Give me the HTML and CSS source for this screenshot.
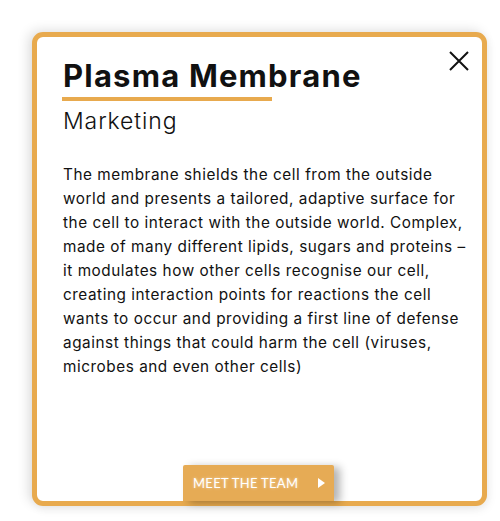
FILE: index.html
```html
<!DOCTYPE html>
<html>
<head>
<meta charset="utf-8">
<link rel="stylesheet" href="styles.css">
</head>
<body>
<div class="card">
  <button class="close" aria-label="Close">
    <svg width="20" height="20" viewBox="0 0 20 20"><path d="M1 1 L19 19 M19 1 L1 19" stroke="#111" stroke-width="2" fill="none"/></svg>
  </button>
  <h1 class="title">Plasma Membrane</h1>
  <div class="rule"></div>
  <h2 class="subtitle">Marketing</h2>
  <p class="text">The membrane shields the cell from the outside<br>world and presents a tailored, adaptive surface for<br>the cell to interact with the outside world. Complex,<br>made of many different lipids, sugars and proteins –<br>it modulates how other cells recognise our cell,<br>creating interaction points for reactions the cell<br>wants to occur and providing a first line of defense<br>against things that could harm the cell (viruses,<br>microbes and even other cells)</p>
  <a class="btn">MEET THE TEAM <span class="tri"></span></a>
</div>
</body>
</html>
```
FILE: styles.css
```css
html, body { margin: 0; padding: 0; background: #fff; }
body { width: 500px; height: 521px; font-family: "Inter", "Liberation Sans", sans-serif; color: #111; }
.card {
  position: relative;
  box-sizing: border-box;
  margin: 32px 0 0 32px;
  width: 455px;
  height: 474px;
  border: 5px solid #e8aa4e;
  border-radius: 11px;
  background: #fff;
  box-shadow: -4px -2px 12px rgba(0,0,0,0.12), 2px 4px 10px rgba(0,0,0,0.06);
  display: flex;
  flex-direction: column;
  padding: 21px 20px 0 26px;
}
.close {
  position: absolute; top: 14px; right: 13px;
  width: 20px; height: 20px; padding: 0; border: 0; background: none;
}
.close svg { display: block; }
.title {
  margin: 0; font-size: 31px; font-weight: 700; line-height: 36px; letter-spacing: 1.2px;
}
.rule { width: 210px; height: 4px; background: #e8aa4e; margin-top: 3px; margin-left: -1px; }
.subtitle { margin: 5px 0 0; font-size: 23px; font-weight: 300; line-height: 30px; letter-spacing: 0.9px; }
.text { margin: 27px 0 0; width: 410px; white-space: nowrap; font-size: 15.3px; line-height: 24px; letter-spacing: 0.55px; }
.btn {
  margin-top: auto; align-self: center; margin-left: -8px;
  width: 151px; height: 36px; box-sizing: border-box;
  background: #e6ab55; color: #fff;
  font-family: "Lato", sans-serif; font-size: 13px; letter-spacing: 0.3px;
  display: flex; align-items: center; justify-content: space-between;
  padding: 0 9px 0 10px;
  border-radius: 2px 2px 0 0;
  text-shadow: 0 0 3px rgba(255,255,255,0.6);
  box-shadow: 6px 2px 8px rgba(0,0,0,0.3);
}
.tri { width: 0; height: 0; border-left: 7px solid #fff; border-top: 5px solid transparent; border-bottom: 5px solid transparent; }
```
